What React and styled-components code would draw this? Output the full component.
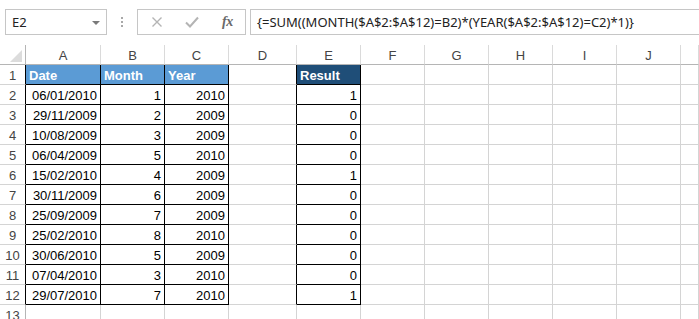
import React from "react";
import styled, { createGlobalStyle } from "styled-components";

const Global = createGlobalStyle`
  html, body { margin: 0; padding: 0; background: #fff; }
  body { font-family: "Liberation Sans", Arial, sans-serif; }
`;

const Page = styled.div`
  width: 699px;
  height: 319px;
  overflow: hidden;
  background: #fff;
`;

const FormulaArea = styled.div`
  height: 45px;
  box-sizing: border-box;
  padding: 9px 0 0 5px;
  display: flex;
  align-items: flex-start;
`;

const NameBox = styled.div`
  width: 102px;
  height: 26px;
  box-sizing: border-box;
  border: 1px solid #c6c6c6;
  display: flex;
  align-items: center;
  justify-content: space-between;
  padding: 0 6px 0 6px;
  font-family: "Noto Sans", "Open Sans", sans-serif;
  font-size: 13px;
  color: #222;
`;

const DropArrow = styled.span`
  width: 0;
  height: 0;
  border-left: 4px solid transparent;
  border-right: 4px solid transparent;
  border-top: 4px solid #7a7a7a;
  margin-top: 1px;
`;

const Separator = styled.div`
  width: 30px;
  height: 26px;
  display: flex;
  flex-direction: column;
  align-items: center;
  justify-content: center;
  gap: 2px;
`;

const Dot = styled.span`
  width: 2px;
  height: 2px;
  background: #a8a8a8;
`;

const ButtonBox = styled.div`
  width: 109px;
  height: 26px;
  box-sizing: border-box;
  border: 1px solid #c6c6c6;
  display: flex;
  align-items: center;
  padding: 0 0 0 13px;
`;

const IconSlot = styled.span`
  width: ${(p) => p.$w}px;
  display: flex;
  align-items: center;
  justify-content: flex-start;
`;

const Fx = styled.span`
  font-family: "Liberation Serif", "DejaVu Serif", serif;
  font-style: italic;
  font-weight: bold;
  font-size: 14px;
  color: #6a6a6a;
  letter-spacing: -0.5px;
`;

const FormulaInput = styled.div`
  flex: 1;
  margin-left: 4px;
  height: 26px;
  box-sizing: border-box;
  border: 1px solid #c6c6c6;
  border-right: none;
  display: flex;
  align-items: center;
  padding-left: 6px;
  font-family: "Noto Sans", "Open Sans", sans-serif;
  font-size: 13px;
  color: #222;
  white-space: nowrap;
  overflow: hidden;
`;

const Grid = styled.div`
  display: grid;
  grid-template-columns: 26px 75px 64px 64px 68px 64px 64px 64px 64px 64px 64px 1fr;
  grid-auto-rows: 20px;
`;

const Corner = styled.div`
  box-sizing: border-box;
  border-right: 1px solid #b5b5b5;
  border-bottom: 1px solid #b5b5b5;
  display: flex;
  align-items: flex-end;
  justify-content: flex-end;
  padding: 0 3px 2px 0;
`;

const CornerTriangle = styled.div`
  width: 12px;
  height: 12px;
  background: #dcdcdc;
  clip-path: polygon(100% 0, 100% 100%, 0 100%);
`;

const ColHead = styled.div`
  box-sizing: border-box;
  border-right: 1px solid #dadada;
  border-bottom: 1px solid #b5b5b5;
  display: flex;
  align-items: center;
  justify-content: center;
  font-size: 13px;
  color: #444;
  padding-top: 2px;
`;

const RowHead = styled.div`
  box-sizing: border-box;
  border-right: 1px solid ${(p) => (p.$boxed ? "#000" : "#b5b5b5")};
  border-bottom: 1px solid #d4d4d4;
  display: flex;
  align-items: center;
  justify-content: center;
  font-size: 13px;
  color: #444;
  padding-top: 1px;
`;

const Cell = styled.div`
  box-sizing: border-box;
  border-right: 1px solid ${(p) => (p.$rightBlack ? "#000" : "#d4d4d4")};
  border-bottom: 1px solid ${(p) => (p.$bottomBlack ? "#000" : "#d4d4d4")};
  background: ${(p) => p.$fill || "transparent"};
  color: ${(p) => p.$color || "#000"};
  font-weight: ${(p) => (p.$bold ? "bold" : "normal")};
  font-size: 13px;
  display: flex;
  align-items: center;
  justify-content: ${(p) => (p.$align === "right" ? "flex-end" : "flex-start")};
  padding: 1px 3px 0 3px;
  white-space: nowrap;
  overflow: hidden;
`;

const cols = ["A", "B", "C", "D", "E", "F", "G", "H", "I", "J", ""];

const data = [
  ["06/01/2010", 1, 2010, 1],
  ["29/11/2009", 2, 2009, 0],
  ["10/08/2009", 3, 2009, 0],
  ["06/04/2009", 5, 2010, 0],
  ["15/02/2010", 4, 2009, 1],
  ["30/11/2009", 6, 2009, 0],
  ["25/09/2009", 7, 2009, 0],
  ["25/02/2010", 8, 2010, 0],
  ["30/06/2010", 5, 2009, 0],
  ["07/04/2010", 3, 2010, 0],
  ["29/07/2010", 7, 2010, 1],
];

const XIcon = () => (
  <svg width="12" height="12" viewBox="0 0 12 12">
    <path d="M1.5 1.5 L10.5 10.5 M10.5 1.5 L1.5 10.5" stroke="#b4b4b4" strokeWidth="1.4" fill="none" />
  </svg>
);

const CheckIcon = () => (
  <svg width="14" height="12" viewBox="0 0 14 12">
    <path d="M1 6.5 L5 10.5 L13 1.5" stroke="#b4b4b4" strokeWidth="2" fill="none" />
  </svg>
);

function buildRows() {
  const out = [];
  for (let r = 1; r <= 13; r++) {
    const boxed = r <= 12;
    out.push(
      <RowHead key={`rh${r}`} $boxed={boxed}>
        {r}
      </RowHead>
    );
    cols.forEach((c, ci) => {
      const inTable = boxed && (c === "A" || c === "B" || c === "C" || c === "E");
      const rightBlack = boxed && (c === "A" || c === "B" || c === "C" || c === "D" || c === "E");
      let content = "";
      let fill;
      let color;
      let bold = false;
      let align = "left";
      if (r === 1) {
        if (c === "A") content = "Date";
        if (c === "B") content = "Month";
        if (c === "C") content = "Year";
        if (c === "E") content = "Result";
        if (c === "A" || c === "B" || c === "C") fill = "#5b9bd5";
        if (c === "E") fill = "#1f4e78";
        if (fill) {
          color = "#fff";
          bold = true;
        }
      } else if (boxed) {
        const row = data[r - 2];
        if (c === "A") { content = row[0]; align = "right"; }
        if (c === "B") { content = row[1]; align = "right"; }
        if (c === "C") { content = row[2]; align = "right"; }
        if (c === "E") { content = row[3]; align = "right"; }
      }
      out.push(
        <Cell
          key={`c${r}${ci}`}
          $rightBlack={rightBlack}
          $bottomBlack={inTable}
          $fill={fill}
          $color={color}
          $bold={bold}
          $align={align}
        >
          {content}
        </Cell>
      );
    });
  }
  return out;
}

export default function App() {
  return (
    <Page>
      <Global />
      <FormulaArea>
        <NameBox>
          <span>E2</span>
          <DropArrow />
        </NameBox>
        <Separator>
          <Dot />
          <Dot />
          <Dot />
        </Separator>
        <ButtonBox>
          <IconSlot $w={34}><XIcon /></IconSlot>
          <IconSlot $w={37}><CheckIcon /></IconSlot>
          <IconSlot $w={20}><Fx>fx</Fx></IconSlot>
        </ButtonBox>
        <FormulaInput>{"{=SUM((MONTH($A$2:$A$12)=B2)*(YEAR($A$2:$A$12)=C2)*1)}"}</FormulaInput>
      </FormulaArea>
      <Grid>
        <Corner>
          <CornerTriangle />
        </Corner>
        {cols.map((c, i) => (
          <ColHead key={`h${i}`}>{c}</ColHead>
        ))}
        {buildRows()}
      </Grid>
    </Page>
  );
}
